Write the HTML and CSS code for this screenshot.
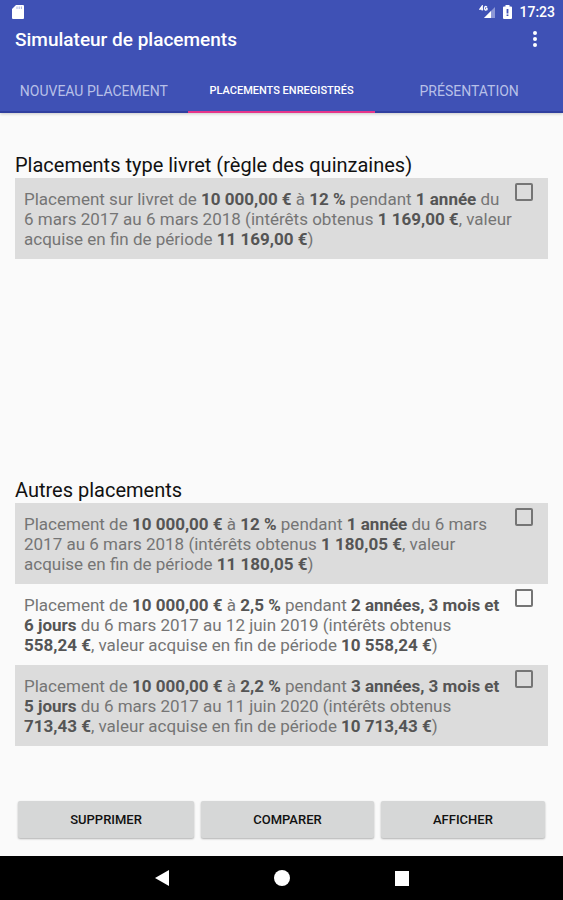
FILE: index.html
```html
<!DOCTYPE html>
<html lang="fr">

<head>
    <meta charset="UTF-8">
    <meta name="viewport" content="width=device-width, initial-scale=1.0">
    <title>Simulateur de placements</title>
    <link rel="stylesheet" href="styles.css">
</head>

<body>
    <header class="app-bar">
        <div class="status-bar">
            <svg class="sd-icon" width="12" height="14" viewBox="0 0 12 14">
                <path d="M4 0H11Q12 0 12 1V13Q12 14 11 14H1Q0 14 0 13V4Z" fill="#fff" />
                <path d="M5 1.5V4M7.2 1.5V4M9.4 1.5V4" stroke="#a9b2e0" stroke-width="1" />
            </svg>
            <div class="status-right">
                <svg width="17" height="14" viewBox="0 0 17 14">
                    <path d="M16 2V13H5Z" fill="#8c97d6" />
                    <path d="M12 6V13H5Z" fill="#fff" />
                    <path d="M3.200 5.500V1L.8 4.200H4.200M8 2Q5.600 .6 5.600 3.200T8 4.600V3.400H7" fill="none" stroke="#fff" stroke-width="1.300" />
                </svg>
                <svg class="battery-icon" width="9" height="14" viewBox="0 0 9 14">
                    <path d="M2.500 0H6.500V1.500H8Q9 1.500 9 2.500V13Q9 14 8 14H1Q0 14 0 13V2.500Q0 1.500 1 1.500H2.500Z" fill="#fff" />
                    <path d="M4.500 4V8.500M4.500 9.500V11" stroke="#3f51b5" stroke-width="1.800" />
                </svg>
                <span class="clock">17:23</span>
            </div>
        </div>
        <div class="toolbar">
            <h1>Simulateur de placements</h1>
            <button class="menu-button" type="button" aria-label="Plus d'options">
                <svg width="4" height="16" viewBox="0 0 4 16" fill="#fff">
                    <circle cx="2" cy="2" r="2" />
                    <circle cx="2" cy="8" r="2" />
                    <circle cx="2" cy="14" r="2" />
                </svg>
            </button>
        </div>
        <nav class="tabs">
            <a href="#nouveau" class="tab">Nouveau placement</a>
            <a href="#enregistres" class="tab active">Placements enregistrés</a>
            <a href="#presentation" class="tab">Présentation</a>
        </nav>
    </header>

    <main class="content">
        <section class="group">
            <h2>Placements type livret (règle des quinzaines)</h2>
            <div class="item shaded">
                <label for="livret1">Placement sur livret de <b>10 000,00&nbsp;€</b> à <b>12 %</b> pendant <b>1 année</b> du 6&nbsp;mars 2017 au 6&nbsp;mars 2018 (intérêts obtenus <b>1 169,00&nbsp;€</b>, valeur acquise en fin de période <b>11 169,00&nbsp;€</b>)</label>
                <input type="checkbox" id="livret1">
            </div>
        </section>

        <section class="group">
            <h2>Autres placements</h2>
            <div class="item shaded">
                <label for="autre1">Placement de <b>10 000,00&nbsp;€</b> à <b>12 %</b> pendant <b>1 année</b> du 6&nbsp;mars 2017 au 6&nbsp;mars 2018 (intérêts obtenus <b>1 180,05&nbsp;€</b>, valeur acquise en fin de période <b>11 180,05&nbsp;€</b>)</label>
                <input type="checkbox" id="autre1">
            </div>
            <div class="item">
                <label for="autre2">Placement de <b>10 000,00&nbsp;€</b> à <b>2,5 %</b> pendant <b>2 années, 3 mois et 6&nbsp;jours</b> du 6&nbsp;mars 2017 au 12&nbsp;juin 2019 (intérêts obtenus <b>558,24&nbsp;€</b>, valeur acquise en fin de période <b>10 558,24&nbsp;€</b>)</label>
                <input type="checkbox" id="autre2">
            </div>
            <div class="item shaded">
                <label for="autre3">Placement de <b>10 000,00&nbsp;€</b> à <b>2,2 %</b> pendant <b>3 années, 3 mois et 5&nbsp;jours</b> du 6&nbsp;mars 2017 au 11&nbsp;juin 2020 (intérêts obtenus <b>713,43&nbsp;€</b>, valeur acquise en fin de période <b>10 713,43&nbsp;€</b>)</label>
                <input type="checkbox" id="autre3">
            </div>
        </section>
    </main>

    <div class="actions">
        <button type="button">Supprimer</button>
        <button type="button">Comparer</button>
        <button type="button">Afficher</button>
    </div>

    <footer class="nav-bar">
        <button type="button" aria-label="Retour">
            <svg width="16" height="16" viewBox="0 0 16 16"><path d="M15 0V16L1 8Z" fill="#fff" /></svg>
        </button>
        <button type="button" aria-label="Accueil">
            <svg width="16" height="16" viewBox="0 0 16 16"><circle cx="8" cy="8" r="8" fill="#fff" /></svg>
        </button>
        <button type="button" aria-label="Applications récentes">
            <svg width="16" height="16" viewBox="0 0 16 16"><rect x="1" y="1" width="14" height="15" fill="#fff" /></svg>
        </button>
    </footer>
</body>

</html>
```

FILE: styles.css
```css
* {
    box-sizing: border-box;
}

body {
    display: flex;
    flex-direction: column;
    min-height: 100vh;
    margin: 0;
    font-family: Roboto, sans-serif;
    background-color: #fafafa;
}

button {
    font-family: inherit;
    border: none;
    cursor: pointer;
}

svg {
    display: block;
}

.app-bar {
    color: white;
    background-color: #3f51b5;
    box-shadow: 0 1px 3px rgba(0, 0, 0, 0.2);
}

.status-bar {
    display: flex;
    justify-content: space-between;
    align-items: center;
    height: 24px;
    padding: 0 8px 0 12px;
}

.status-right {
    display: flex;
    align-items: center;
    gap: 7px;
}

.clock {
    font-size: 14px;
    font-weight: 500;
}

.toolbar {
    display: flex;
    justify-content: space-between;
    align-items: center;
    height: 30px;
    padding: 0 16px 0 15px;
}

h1 {
    margin: 0;
    font-size: 19px;
    font-weight: 500;
}

.menu-button {
    padding: 4px 10px;
    background: none;
}

.tabs {
    display: flex;
    height: 59px;
    padding-top: 16px;
}

.tab {
    flex: 1;
    display: flex;
    align-items: center;
    justify-content: center;
    border-bottom: 2px solid #303f9f;
    color: #b8c0e8;
    font-size: 14px;
    font-weight: 400;
    text-transform: uppercase;
    text-decoration: none;
    white-space: nowrap;
}

.tab.active {
    border-bottom-color: #e6358a;
    color: white;
    font-size: 11px;
    font-weight: 500;
}

.content {
    flex: 1;
    display: flex;
    flex-direction: column;
    gap: 7px;
    padding: 41px 15px 0;
}

.group {
    flex: 1 1 0;
}

h2 {
    margin: 0;
    padding-bottom: 2px;
    font-size: 20px;
    font-weight: 400;
    line-height: 22px;
    color: #111;
}

.item {
    display: flex;
    align-items: flex-start;
    padding: 11px 15px 10px 9px;
    font-size: 17px;
    line-height: 20px;
    color: #757575;
}

.item.shaded {
    background-color: #dcdcdc;
}

.item label {
    flex: 1;
}

.item b {
    font-weight: 700;
    color: #555;
}

.item input {
    appearance: none;
    width: 18px;
    height: 18px;
    margin: -6px 0 0;
    border: 2px solid #757575;
    border-radius: 2px;
}

.item input:checked {
    background-color: #e6358a;
}

.actions {
    display: flex;
    gap: 7px;
    padding: 4px 18px 18px;
}

.actions button {
    flex: 1 1 auto;
    height: 37px;
    border-radius: 2px;
    background-color: #d6d7d7;
    box-shadow: 0 1px 2px rgba(0, 0, 0, 0.3);
    color: #111;
    font-size: 13px;
    font-weight: 500;
    text-transform: uppercase;
}

.nav-bar {
    display: flex;
    justify-content: center;
    align-items: center;
    gap: 80px;
    height: 44px;
    background-color: black;
}

.nav-bar button {
    padding: 12px;
    background: none;
}
```
